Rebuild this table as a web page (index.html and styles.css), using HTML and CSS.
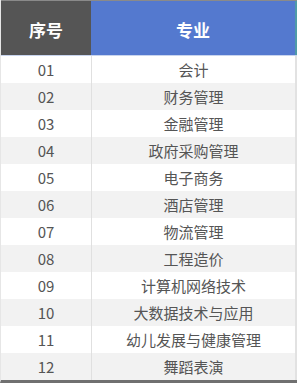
FILE: index.html
```html
<!DOCTYPE html>
<html lang="zh">
<head>
<meta charset="utf-8">
<link rel="stylesheet" href="styles.css">
</head>
<body>
<div class="table">
  <div class="head">
    <div class="h h-num">序号</div>
    <div class="h h-name">专业</div>
  </div>
  <div class="row"><div class="c num">01</div><div class="c name">会计</div></div>
  <div class="row alt"><div class="c num">02</div><div class="c name">财务管理</div></div>
  <div class="row"><div class="c num">03</div><div class="c name">金融管理</div></div>
  <div class="row alt"><div class="c num">04</div><div class="c name">政府采购管理</div></div>
  <div class="row"><div class="c num">05</div><div class="c name">电子商务</div></div>
  <div class="row alt"><div class="c num">06</div><div class="c name">酒店管理</div></div>
  <div class="row"><div class="c num">07</div><div class="c name">物流管理</div></div>
  <div class="row alt"><div class="c num">08</div><div class="c name">工程造价</div></div>
  <div class="row"><div class="c num">09</div><div class="c name">计算机网络技术</div></div>
  <div class="row alt"><div class="c num">10</div><div class="c name">大数据技术与应用</div></div>
  <div class="row"><div class="c num">11</div><div class="c name">幼儿发展与健康管理</div></div>
  <div class="row alt"><div class="c num">12</div><div class="c name">舞蹈表演</div></div>
</div>
</body>
</html>
```
FILE: styles.css
```css
html, body {
  margin: 0;
  padding: 0;
  background: #ffffff;
}
body {
  font-family: "Noto Sans CJK SC", "Noto Sans", sans-serif;
}
.table {
  width: 297px;
  border-left: 1px solid #e6e6e6;
  border-bottom: 3px solid #707070;
  box-sizing: border-box;
}
.head {
  display: grid;
  grid-template-columns: 90px 206px;
  height: 56px;
  border-top: 1px solid #8a8a8a;
  box-sizing: border-box;
  border-bottom: 1px solid #c8d4ee;
}
.h {
  display: flex;
  align-items: center;
  justify-content: center;
  color: #ffffff;
  font-weight: 700;
  font-size: 17px;
  padding-top: 2px;
}
.h-num {
  background: #555555;
}
.h-name {
  background: #5479cf;
  border-right: 2px solid #4f9aa8;
}
.row {
  display: grid;
  grid-template-columns: 90px 206px;
  height: 27px;
  background: #ffffff;
}
.row.alt {
  background: #f2f2f2;
}
.c {
  display: flex;
  align-items: center;
  justify-content: center;
  color: #555555;
  font-size: 15px;
}
.name {
  border-left: 1px solid #e0e0e0;
  border-right: 2px solid #e2e2e2;
}
```
